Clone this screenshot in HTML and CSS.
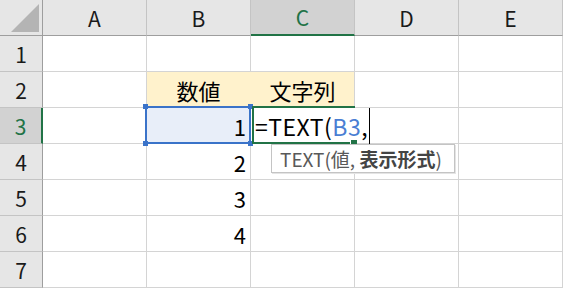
FILE: index.html
```html
<!DOCTYPE html>
<html lang="ja">
<head>
<meta charset="utf-8">
<link rel="stylesheet" href="styles.css">
</head>
<body>
<div class="sheet">
  <div class="grid">
    <div class="hd corner"><svg class="tri" width="43" height="36" viewBox="0 0 43 36"><polygon points="11,32 39,4 39,32" fill="#b4b4b4"/></svg></div>
    <div class="hd col">A</div>
    <div class="hd col">B</div>
    <div class="hd col active-col">C</div>
    <div class="hd col">D</div>
    <div class="hd col">E</div>

    <div class="hd row">1</div>
    <div class="cell"></div><div class="cell"></div><div class="cell"></div><div class="cell"></div><div class="cell"></div>

    <div class="hd row">2</div>
    <div class="cell"></div>
    <div class="cell fill fill-join center">数値</div>
    <div class="cell fill center">文字列</div>
    <div class="cell"></div><div class="cell"></div>

    <div class="hd row active-row">3</div>
    <div class="cell"></div>
    <div class="cell num sel">1</div>
    <div class="cell editing"><span class="formula">=TEXT(<span class="ref">B3</span>,<span class="caret"></span></span></div>
    <div class="cell"></div><div class="cell"></div>

    <div class="hd row">4</div>
    <div class="cell"></div><div class="cell num">2</div><div class="cell"></div><div class="cell"></div><div class="cell"></div>

    <div class="hd row">5</div>
    <div class="cell"></div><div class="cell num">3</div><div class="cell"></div><div class="cell"></div><div class="cell"></div>

    <div class="hd row">6</div>
    <div class="cell"></div><div class="cell num">4</div><div class="cell"></div><div class="cell"></div><div class="cell"></div>

    <div class="hd row">7</div>
    <div class="cell"></div><div class="cell"></div><div class="cell"></div><div class="cell"></div><div class="cell"></div>
  </div>

  <div class="sel-box">
    <span class="handle tl"></span><span class="handle tr"></span>
    <span class="handle bl"></span><span class="handle br"></span>
  </div>
  <div class="edit-box"><span class="fill-handle"></span></div>
  <div class="tip">TEXT(値, <b>表示形式</b>)</div>
</div>
</body>
</html>
```

FILE: styles.css
```css
html, body {
  margin: 0;
  padding: 0;
  background: #ffffff;
}

.sheet {
  position: relative;
  width: 563px;
  height: 288px;
  overflow: hidden;
  font-family: "Noto Sans CJK JP", "Noto Sans", sans-serif;
  color: #000;
}

.grid {
  display: grid;
  grid-template-columns: 43px repeat(5, 104px);
  grid-template-rows: 36px repeat(7, 36px);
}

.grid > div {
  box-sizing: border-box;
  border-right: 1px solid #d4d4d4;
  border-bottom: 1px solid #d4d4d4;
  display: flex;
  align-items: center;
  overflow: visible;
  white-space: nowrap;
}

.hd {
  background: #e6e6e6;
  justify-content: center;
  font-size: 21px;
  color: #1a1a1a;
}

.grid > .col {
  border-right-color: #c4c4c4;
  border-bottom-color: #9e9e9e;
}

.grid > .row {
  border-right-color: #9e9e9e;
  border-bottom-color: #c4c4c4;
}

.grid > .corner {
  border-right-color: #9e9e9e;
  border-bottom-color: #9e9e9e;
  position: relative;
}

.tri {
  position: absolute;
  left: 0;
  top: 0;
}

.grid > .active-col {
  background: #d2d2d2;
  color: #217346;
  border-bottom: 2px solid #217346;
}

.grid > .active-row {
  background: #d2d2d2;
  color: #217346;
  border-right: 2px solid #217346;
}

.cell {
  font-size: 22px;
  padding: 0 4px;
}

.center {
  justify-content: center;
}

.num {
  justify-content: flex-end;
}

.grid > .fill {
  background: #fff2cc;
  border-bottom-color: #fff2cc;
}

.grid > .fill-join {
  border-right-color: #fff2cc;
}

.grid > .sel {
  background: #e8eef9;
}

.grid > .editing {
  border-right-color: #ffffff;
  position: relative;
  z-index: 1;
  padding-left: 4px;
}

.formula {
  background: #fff;
  display: inline-flex;
  align-items: center;
  height: 35px;
  padding-right: 1px;
  font-size: 23px;
  letter-spacing: 0.5px;
}

.ref {
  color: #4a7ed3;
}

.caret {
  display: inline-block;
  width: 1px;
  height: 36px;
  background: #000;
  margin-left: 1px;
}

.sel-box {
  position: absolute;
  left: 145px;
  top: 106px;
  width: 106px;
  height: 38px;
  box-sizing: border-box;
  border: 2px solid #3a73c9;
  z-index: 2;
}

.handle {
  position: absolute;
  width: 5px;
  height: 5px;
  background: #3a73c9;
}

.tl { left: -4px; top: -4px; }
.tr { right: -4px; top: -4px; }
.bl { left: -4px; bottom: -4px; }
.br { right: -4px; bottom: -4px; }

.edit-box {
  position: absolute;
  left: 252px;
  top: 106px;
  width: 103px;
  height: 38px;
  box-sizing: border-box;
  border: 2px solid #217346;
  border-right: none;
  z-index: 3;
}

.fill-handle {
  position: absolute;
  right: -2px;
  bottom: -3px;
  width: 6px;
  height: 5px;
  background: #217346;
  border-left: 1px solid #fff;
}

.tip {
  position: absolute;
  left: 271px;
  top: 144px;
  width: 184px;
  height: 29px;
  box-sizing: border-box;
  background: #fff;
  border: 1px solid #c4c4c4;
  box-shadow: 1px 1px 0 #e4e4e4;
  font-size: 19px;
  line-height: 27px;
  padding-left: 8px;
  color: #595959;
  z-index: 4;
  white-space: nowrap;
}

.tip b {
  color: #444;
  font-weight: 700;
}
```
